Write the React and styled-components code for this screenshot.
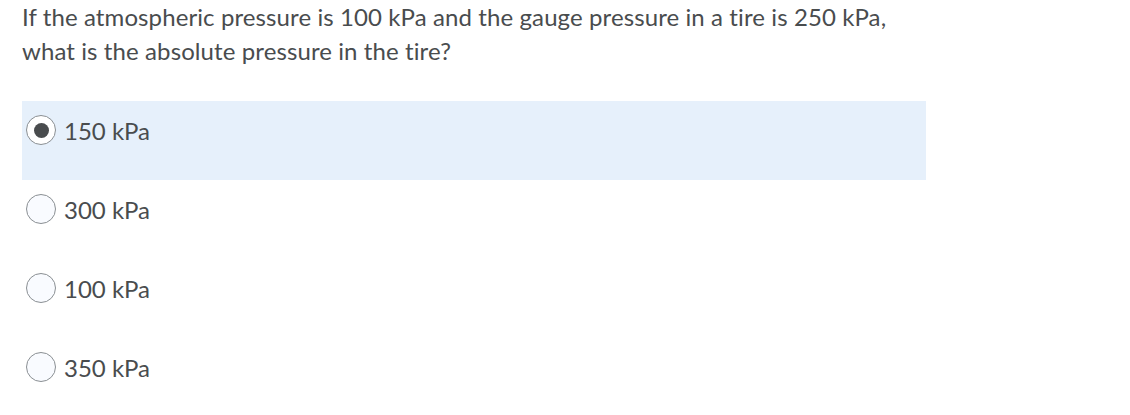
import React, { useState } from "react";
import styled, { createGlobalStyle } from "styled-components";

const Global = createGlobalStyle`
  html, body { margin: 0; padding: 0; background: #ffffff; }
  body { font-family: Lato, "Noto Sans", sans-serif; color: #494c4e; }
`;

const Page = styled.div`
  padding: 0 22px;
  width: 904px;
`;

const Question = styled.p`
  margin: 0;
  font-size: 24px;
  line-height: 34px;
  letter-spacing: 0.1px;
  color: #494c4e;
`;

const Options = styled.div`
  margin-top: 33px;
  display: flex;
  flex-direction: column;
`;

const Option = styled.label`
  display: flex;
  align-items: flex-start;
  height: 79px;
  padding: 14px 0 0 4px;
  box-sizing: border-box;
  background: ${(p) => (p.$selected ? "#e6f0fb" : "transparent")};
  cursor: pointer;
`;

const Radio = styled.span`
  flex: none;
  width: 30px;
  height: 30px;
  box-sizing: border-box;
  border-radius: 50%;
  border: 1.5px solid #8a8f93;
  background: ${(p) => (p.$checked ? "#ffffff" : "#f9fbff")};
  display: flex;
  align-items: center;
  justify-content: center;
  &::after {
    content: "";
    display: ${(p) => (p.$checked ? "block" : "none")};
    width: 15px;
    height: 15px;
    border-radius: 50%;
    background: #494c4e;
  }
`;

const OptionText = styled.span`
  margin-left: 8px;
  font-size: 24px;
  line-height: 32px;
  color: #494c4e;
`;

const choices = ["150 kPa", "300 kPa", "100 kPa", "350 kPa"];

export default function App() {
  const [sel, setSel] = useState(0);
  return (
    <>
      <Global />
      <Page>
        <Question>
          If the atmospheric pressure is 100 kPa and the gauge pressure in a tire is 250 kPa,
          <br />
          what is the absolute pressure in the tire?
        </Question>
        <Options>
          {choices.map((c, i) => (
            <Option key={c} $selected={sel === i} onClick={() => setSel(i)}>
              <Radio $checked={sel === i} />
              <OptionText>{c}</OptionText>
            </Option>
          ))}
        </Options>
      </Page>
    </>
  );
}
